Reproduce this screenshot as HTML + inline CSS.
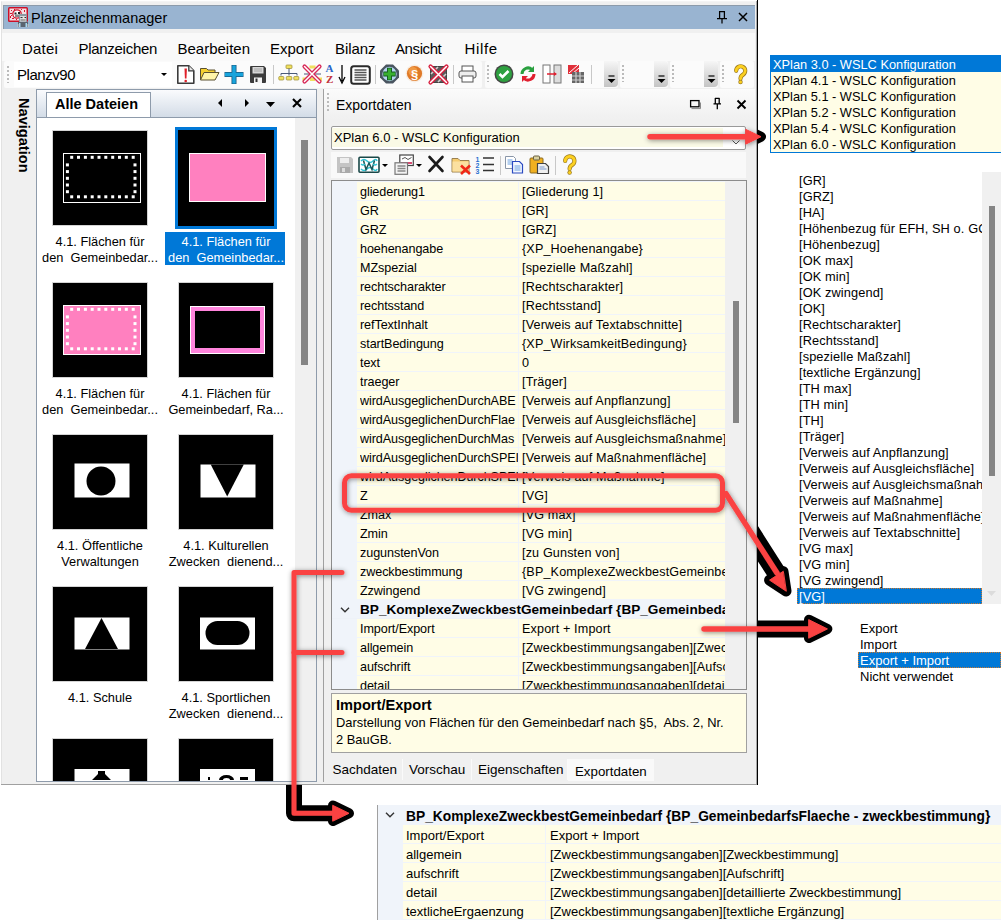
<!DOCTYPE html>
<html><head><meta charset="utf-8">
<style>
*{margin:0;padding:0;box-sizing:border-box}
html,body{width:1001px;height:920px;overflow:hidden;background:#fff;font-family:"Liberation Sans", sans-serif;color:#000}
.a{position:absolute}
.t{position:absolute;white-space:nowrap;line-height:1}
svg{position:absolute;overflow:visible}
</style></head><body>

<div class="a" style="left:1px;top:1px;width:757px;height:784px;background:#f0f0f0;border-left:1px solid #e2e2e2;border-top:1px solid #f4f4f4"></div>
<div class="a" style="left:3px;top:5px;width:752px;height:24px;background:#99b4d1;border-top:1px solid #8c9bab;border-left:1px solid #8c9bab"></div>
<div class="t" style="left:31px;top:11px;font-size:14.5px">Planzeichenmanager</div>
<svg style="left:8px;top:7px" width="21" height="21" viewBox="0 0 21 21">
<rect x="0" y="0" width="20" height="15" rx="1.5" fill="#cc1028"/>
<rect x="1.5" y="1.5" width="17" height="12" fill="#f4e0e4"/>
<g fill="#d01830"><rect x="3" y="3" width="1" height="1"/><rect x="6" y="2" width="1" height="2"/><rect x="9" y="3" width="2" height="1"/><rect x="13" y="2" width="1" height="1"/><rect x="16" y="3" width="1" height="2"/><rect x="2" y="6" width="2" height="1"/><rect x="2" y="9" width="1" height="2"/><rect x="4" y="11" width="2" height="1"/><rect x="8" y="12" width="1" height="1"/><rect x="16" y="7" width="1" height="1"/><rect x="17" y="10" width="1" height="2"/><rect x="3" y="8" width="1" height="1"/></g>
<circle cx="9" cy="7" r="4.2" fill="#fff" stroke="#d01830" stroke-width="1.3"/>
<path d="M6.5 5.5h2v2h-2zM10 5h2v2h-2z" fill="#222"/>
<rect x="7" y="7.5" width="6" height="2.5" fill="#8a8a8a"/>
<rect x="11" y="7" width="8" height="8" fill="#8e98a2"/>
<rect x="12" y="9" width="6" height="5.5" fill="#d8dce0"/>
<rect x="15" y="10" width="2" height="4" fill="#f0e6dc"/>
<path d="M12.5 10.5h2M16.5 10.5h1.5" stroke="#333" stroke-width="1"/>
<path d="M12.5 13h5" stroke="#666" stroke-width="1"/>
<rect x="10" y="15" width="10" height="5" fill="#5a6470"/>
<rect x="11" y="16" width="1.5" height="4" fill="#a8d8f0"/><rect x="17.5" y="16" width="1.5" height="4" fill="#a8d8f0"/>
<rect x="9.5" y="17" width="1" height="3" fill="#c8c8c8"/><rect x="19.5" y="17" width="1" height="3" fill="#c8c8c8"/>
</svg>
<svg style="left:716px;top:10px" width="12" height="14" viewBox="0 0 12 14">
<path d="M3 1.6h6M3.6 1v7.5M8.4 1v7.5M1 8.6h10M6 8.6v4.8" stroke="#000" stroke-width="1.25" fill="none"/></svg>
<svg style="left:738px;top:12px" width="10" height="10" viewBox="0 0 10 10">
<path d="M1 1L9 9M9 1L1 9" stroke="#000" stroke-width="1.5" fill="none"/></svg>
<div class="a" style="left:2px;top:29px;width:753px;height:32px;background:#f9f9f9;border-top:4px solid #f0f0f0"></div>
<div class="t" style="left:22px;top:40.7px;font-size:15px;letter-spacing:0.2px">Datei</div>
<div class="t" style="left:78.5px;top:40.7px;font-size:15px;letter-spacing:-0.29px">Planzeichen</div>
<div class="t" style="left:177.5px;top:40.7px;font-size:15px;letter-spacing:0px">Bearbeiten</div>
<div class="t" style="left:270px;top:40.7px;font-size:15px;letter-spacing:0px">Export</div>
<div class="t" style="left:335px;top:40.7px;font-size:15px;letter-spacing:-0.07px">Bilanz</div>
<div class="t" style="left:395px;top:40.7px;font-size:15px;letter-spacing:-0.4px">Ansicht</div>
<div class="t" style="left:464.5px;top:40.7px;font-size:15px;letter-spacing:0.65px">Hilfe</div>
<div class="a" style="left:2px;top:61px;width:753px;height:27px;background:#f0f0f0"></div>
<div class="a" style="left:4px;top:61px;width:478px;height:27px;background:#fbfbfb;border-radius:2px"></div>
<div class="a" style="left:485px;top:61px;width:133px;height:27px;background:#fbfbfb;border-radius:2px"></div>
<div class="a" style="left:620px;top:61px;width:48px;height:27px;background:#fbfbfb;border-radius:2px"></div>
<div class="a" style="left:670px;top:61px;width:48px;height:27px;background:#fbfbfb;border-radius:2px"></div>
<div class="a" style="left:720px;top:61px;width:34px;height:27px;background:#fbfbfb;border-radius:2px"></div>
<div class="a" style="left:14px;top:62px;width:158px;height:25px;background:#fff"></div>
<div class="t" style="left:17px;top:66.8px;font-size:15px;letter-spacing:-0.45px">Planzv90</div>
<svg style="left:161px;top:73px" width="6" height="4" viewBox="0 0 6 4"><path d="M0 0h6L3 3z" fill="#000"/></svg>
<div class="a" style="left:7px;top:66px;width:2px;height:17px;background:repeating-linear-gradient(#bbb 0 2px,transparent 2px 4px)"></div>
<svg style="left:176px;top:64px" width="20" height="21" viewBox="0 0 20 21"><path d="M1.8 1.8h11l5 5v12.4h-16z" fill="#fff" stroke="#3a3a3a" stroke-width="1.6" stroke-linejoin="round"/><path d="M12.8 1.8v5h5" fill="#e8e8e8" stroke="#3a3a3a" stroke-width="1.3"/><path d="M8.5 4.5h2.4l-.4 10h-1.6z" fill="#e0202a"/><circle cx="9.7" cy="17" r="1.3" fill="#e0202a"/></svg>
<svg style="left:199px;top:67px" width="21" height="14" viewBox="0 0 21 14"><path d="M1.5 1.5h6l1.5 1.5h7v9.5h-14.5z" fill="#f6d030" stroke="#5a5030" stroke-width="1"/><path d="M5 5.5h15l-4 7.5h-14.5z" fill="#fff4a8" stroke="#5a5030" stroke-width="1"/></svg>
<svg style="left:224px;top:64px" width="20" height="21" viewBox="0 0 20 21"><path d="M10 1v19M0.5 10.5h19" stroke="#1a5a80" stroke-width="5"/><path d="M10 1.5v18M1 10.5h18" stroke="#18a4dc" stroke-width="3.4"/></svg>
<svg style="left:249px;top:65px" width="18" height="19" viewBox="0 0 18 19"><path d="M1 2a1 1 0 0 1 1-1h13l2 2v14a1 1 0 0 1-1 1H2a1 1 0 0 1-1-1z" fill="#3c3c3c"/><rect x="3.5" y="2" width="11" height="6.5" fill="#d8d8d8"/><path d="M5 4h8M5 6h8" stroke="#999" stroke-width=".8"/><rect x="5" y="12.5" width="8" height="5.5" fill="#f4f4f4"/><rect x="6.5" y="13.5" width="2" height="3.5" fill="#333"/></svg>
<div class="a" style="left:273px;top:65px;width:1px;height:19px;background:#c8c8c8"></div>
<div class="a" style="left:375px;top:65px;width:1px;height:19px;background:#c8c8c8"></div>
<div class="a" style="left:453px;top:65px;width:1px;height:19px;background:#c8c8c8"></div>
<div class="a" style="left:591px;top:65px;width:1px;height:19px;background:#c8c8c8"></div>
<svg style="left:278px;top:64px" width="21" height="18" viewBox="0 0 21 18"><rect x="8" y="1" width="6" height="3.5" rx=".8" fill="#f0e060" stroke="#9a8a30" stroke-width=".7"/><path d="M11 4.5v5M3 9.5h16M3 9.5v2M19 9.5v2M11 9.5v2" stroke="#4a5a78" stroke-width="1"/><rect x="0.8" y="12.5" width="5" height="3.5" rx=".8" fill="#f0e060" stroke="#9a8a30" stroke-width=".7"/><rect x="8.3" y="12.5" width="5.5" height="3.5" rx=".8" fill="#f0e060" stroke="#9a8a30" stroke-width=".7"/><rect x="15.8" y="12.5" width="5" height="3.5" rx=".8" fill="#f0e060" stroke="#9a8a30" stroke-width=".7"/></svg>
<svg style="left:302px;top:64px" width="20" height="20" viewBox="0 0 20 20"><rect x="7.5" y="1.5" width="6" height="3" fill="#f0e060"/><path d="M2 10h17" stroke="#4a5a78" stroke-width="1"/><rect x="0.5" y="13.5" width="5" height="3.5" fill="#f0e060"/><rect x="8" y="13.5" width="5" height="3.5" fill="#f0e060"/><rect x="15" y="13.5" width="5" height="3.5" fill="#f0e060"/><path d="M2.5 2.5L17.5 17.5M17.5 2.5L2.5 17.5" stroke="#d82858" stroke-width="4.2" stroke-linecap="round"/><path d="M2.5 2.5L17.5 17.5M17.5 2.5L2.5 17.5" stroke="#fff" stroke-width="1.5" stroke-linecap="round"/></svg>
<div class="t" style="left:325.5px;top:63px;font-size:11px;font-family:'Liberation Serif',serif;color:#2a64c8;font-weight:bold">A</div>
<div class="t" style="left:326px;top:73.5px;font-size:11px;font-family:'Liberation Serif',serif;color:#c03038;font-weight:bold">Z</div>
<svg style="left:338px;top:65px" width="8" height="19" viewBox="0 0 8 19"><path d="M4 0v16M1 12l3 6 3-6" stroke="#000" stroke-width="1.3" fill="none"/></svg>
<svg style="left:350px;top:65px" width="21" height="20" viewBox="0 0 21 20"><rect x="1.2" y="1.2" width="18.6" height="17.6" rx="2.5" fill="#fff" stroke="#2a2a2a" stroke-width="2"/><path d="M4.5 5h12M4.5 7.5h12M4.5 10h12M4.5 12.5h12M4.5 15h12" stroke="#555" stroke-width="1.3"/></svg>
<svg style="left:379px;top:64px" width="21" height="20" viewBox="0 0 21 20"><path d="M7 0.5h7l6 6v7l-6 6h-7l-6-6v-7z" fill="#4a5560"/><circle cx="10.5" cy="10" r="7.2" fill="#b4d4f0"/><path d="M10.5 3.8v12.4M4.3 10h12.4" stroke="#145a20" stroke-width="5"/><path d="M10.5 4.5v11M5 10h11" stroke="#38b030" stroke-width="3.2"/></svg>
<svg style="left:405px;top:64px" width="19" height="19" viewBox="0 0 19 19"><circle cx="9.5" cy="9.5" r="9" fill="#f8eee4"/><circle cx="9.5" cy="9.5" r="7.6" fill="#e07a28"/><circle cx="8" cy="7.5" r="4.5" fill="#f8a850" opacity=".7"/><text x="9.5" y="14.5" font-size="13" text-anchor="middle" fill="#fff" font-family="Liberation Sans" font-weight="bold">§</text></svg>
<svg style="left:428px;top:64px" width="21" height="21" viewBox="0 0 21 21"><rect x="2.5" y="2.5" width="16" height="16" fill="#5a5a5a" stroke="#444"/><path d="M3 10l7-7M3 17l14-14M10 18l8-8" stroke="#cfcfcf" stroke-width="1.6"/><path d="M2.5 2.5L18.5 18.5M18.5 2.5L2.5 18.5" stroke="#d82040" stroke-width="4.2" stroke-linecap="round"/><path d="M2.5 2.5L18.5 18.5M18.5 2.5L2.5 18.5" stroke="#fff" stroke-width="1.5" stroke-linecap="round"/></svg>
<svg style="left:458px;top:65px" width="19" height="18" viewBox="0 0 19 18"><rect x="4" y="1" width="11" height="6" fill="#fff" stroke="#555"/><rect x="1" y="6" width="17" height="7" rx="2" fill="#eee" stroke="#555"/><rect x="4" y="11" width="11" height="6" fill="#fff" stroke="#555"/></svg>
<div class="a" style="left:487px;top:65px;width:2px;height:17px;background:repeating-linear-gradient(#bbb 0 2px,transparent 2px 4px)"></div>
<div class="a" style="left:622px;top:65px;width:2px;height:17px;background:repeating-linear-gradient(#bbb 0 2px,transparent 2px 4px)"></div>
<div class="a" style="left:672px;top:65px;width:2px;height:17px;background:repeating-linear-gradient(#bbb 0 2px,transparent 2px 4px)"></div>
<div class="a" style="left:722px;top:65px;width:2px;height:17px;background:repeating-linear-gradient(#bbb 0 2px,transparent 2px 4px)"></div>
<svg style="left:494px;top:64px" width="20" height="20" viewBox="0 0 20 20"><circle cx="10" cy="10" r="9.5" fill="#444"/><circle cx="10" cy="10" r="8" fill="#2ea040"/><path d="M5.5 10l3 3 6-6" stroke="#fff" stroke-width="2.6" fill="none"/></svg>
<svg style="left:520px;top:65px" width="16" height="18" viewBox="0 0 16 18"><path d="M2 9a6 6 0 0 1 10-4.5" stroke="#2aa040" stroke-width="3" fill="none"/><path d="M14 1v6h-6z" fill="#2aa040"/><path d="M14 9a6 6 0 0 1-10 4.5" stroke="#e02030" stroke-width="3" fill="none"/><path d="M2 17v-6h6z" fill="#e02030"/></svg>
<svg style="left:542px;top:64px" width="20" height="20" viewBox="0 0 20 20"><rect x="1" y="1" width="7" height="18" fill="#fff" stroke="#777"/><rect x="12" y="1" width="7" height="18" fill="#ddd" stroke="#777"/><path d="M5 10h9" stroke="#e02030" stroke-width="1.5"/><path d="M12 8l3 2-3 2z" fill="#e02030"/></svg>
<svg style="left:567px;top:64px" width="18" height="20" viewBox="0 0 18 20"><rect x="1" y="1" width="11" height="9" fill="#e0303a"/><path d="M2 9l9-8M5 10l7-6" stroke="#fff" stroke-width="1"/><rect x="5" y="8" width="12" height="11" fill="#666"/><path d="M5 12h12M5 16h12M9 8v11M13 8v11" stroke="#ccc" stroke-width="1.2"/></svg>
<div class="a" style="left:604px;top:61px;width:14px;height:26px;background:linear-gradient(#f6f6f6,#c4c4c4);border-radius:0 4px 4px 0"></div>
<svg style="left:607px;top:75px" width="9" height="9" viewBox="0 0 9 9"><path d="M1.5 1h6" stroke="#000" stroke-width="1.2"/><path d="M0.5 4h8L4.5 8z" fill="#000"/></svg>
<div class="a" style="left:654px;top:61px;width:14px;height:26px;background:linear-gradient(#f6f6f6,#c4c4c4);border-radius:0 4px 4px 0"></div>
<svg style="left:657px;top:75px" width="9" height="9" viewBox="0 0 9 9"><path d="M1.5 1h6" stroke="#000" stroke-width="1.2"/><path d="M0.5 4h8L4.5 8z" fill="#000"/></svg>
<div class="a" style="left:704px;top:61px;width:14px;height:26px;background:linear-gradient(#f6f6f6,#c4c4c4);border-radius:0 4px 4px 0"></div>
<svg style="left:707px;top:75px" width="9" height="9" viewBox="0 0 9 9"><path d="M1.5 1h6" stroke="#000" stroke-width="1.2"/><path d="M0.5 4h8L4.5 8z" fill="#000"/></svg>
<svg style="left:733px;top:65px" width="16" height="20" viewBox="0 0 16 20"><path d="M3.2 5.8a4.5 4.5 0 1 1 6.9 3.8c-1.8 1.1-2.6 2-2.6 4.1" stroke="#9a7a20" stroke-width="4.2" fill="none" stroke-linecap="round"/><circle cx="7.5" cy="17" r="2.2" fill="#9a7a20"/><path d="M3.2 5.8a4.5 4.5 0 1 1 6.9 3.8c-1.8 1.1-2.6 2-2.6 4.1" stroke="#fcd020" stroke-width="2.8" fill="none" stroke-linecap="round"/><circle cx="7.5" cy="17" r="1.5" fill="#fcd020"/></svg>
<div class="t" style="left:12px;top:98px;font-size:14.6px;font-weight:bold;transform-origin:0 0;transform:translate(18.5px,0) rotate(90deg)">Navigation</div>
<div class="a" style="left:36px;top:89px;width:281px;height:693px;border:1px solid #8e9bab;background:#fff"></div>
<div class="a" style="left:37px;top:90px;width:279px;height:28px;background:linear-gradient(#fafbfd,#d3dce7);border-bottom:1px solid #8e9bab"></div>
<div class="a" style="left:46px;top:92px;width:105px;height:26px;background:#fff;border:1px solid #8e9bab"></div>
<div class="t" style="left:55px;top:96.5px;font-size:14.5px;font-weight:bold">Alle Dateien</div>
<svg style="left:218px;top:99px" width="5" height="8" viewBox="0 0 5 8"><path d="M4 0v8L0 4z" fill="#000"/></svg>
<svg style="left:245px;top:98.5px" width="5" height="8" viewBox="0 0 5 8"><path d="M0 0v8l4-4z" fill="#000"/></svg>
<svg style="left:266px;top:102px" width="9" height="5" viewBox="0 0 9 5"><path d="M0 0h9L4.5 5z" fill="#000"/></svg>
<svg style="left:291.5px;top:98px" width="10" height="10" viewBox="0 0 10 10"><path d="M1 1L9 9M9 1L1 9" stroke="#000" stroke-width="2.1"/></svg>
<div class="a" style="left:295px;top:118px;width:21px;height:663px;background:#f0f0f0"></div>
<div class="a" style="left:301px;top:140px;width:7px;height:225px;background:#858585"></div>
<div class="a" style="left:37px;top:118px;width:258px;height:663px;overflow:hidden">
<div class="a" style="left:15px;top:12px;width:96px;height:96px;border:1px solid #d4d4d4"></div>
<svg style="left:16px;top:13px" width="94" height="94" viewBox="0 0 94 94"><rect width="94" height="94" fill="#000"/><rect x="10.5" y="22.5" width="77" height="49" fill="none" stroke="#fff" stroke-width="1"/><rect x="17.2" y="24.8" width="3" height="3" fill="#fff"/><rect x="17.2" y="64.3" width="3" height="3" fill="#fff"/><rect x="24.0" y="24.8" width="3" height="3" fill="#fff"/><rect x="24.0" y="64.3" width="3" height="3" fill="#fff"/><rect x="30.9" y="24.8" width="3" height="3" fill="#fff"/><rect x="30.9" y="64.3" width="3" height="3" fill="#fff"/><rect x="37.7" y="24.8" width="3" height="3" fill="#fff"/><rect x="37.7" y="64.3" width="3" height="3" fill="#fff"/><rect x="44.5" y="24.8" width="3" height="3" fill="#fff"/><rect x="44.5" y="64.3" width="3" height="3" fill="#fff"/><rect x="51.3" y="24.8" width="3" height="3" fill="#fff"/><rect x="51.3" y="64.3" width="3" height="3" fill="#fff"/><rect x="58.2" y="24.8" width="3" height="3" fill="#fff"/><rect x="58.2" y="64.3" width="3" height="3" fill="#fff"/><rect x="65.0" y="24.8" width="3" height="3" fill="#fff"/><rect x="65.0" y="64.3" width="3" height="3" fill="#fff"/><rect x="71.8" y="24.8" width="3" height="3" fill="#fff"/><rect x="71.8" y="64.3" width="3" height="3" fill="#fff"/><rect x="78.7" y="24.8" width="3" height="3" fill="#fff"/><rect x="78.7" y="64.3" width="3" height="3" fill="#fff"/><rect x="12.9" y="32.4" width="3" height="3" fill="#fff"/><rect x="80.5" y="32.4" width="3" height="3" fill="#fff"/><rect x="12.9" y="39.1" width="3" height="3" fill="#fff"/><rect x="80.5" y="39.1" width="3" height="3" fill="#fff"/><rect x="12.9" y="45.8" width="3" height="3" fill="#fff"/><rect x="80.5" y="45.8" width="3" height="3" fill="#fff"/><rect x="12.9" y="52.5" width="3" height="3" fill="#fff"/><rect x="80.5" y="52.5" width="3" height="3" fill="#fff"/><rect x="12.9" y="59.2" width="3" height="3" fill="#fff"/><rect x="80.5" y="59.2" width="3" height="3" fill="#fff"/></svg>
<div class="a" style="left:141px;top:12px;width:96px;height:96px;border:1px solid #d4d4d4"></div>
<svg style="left:142px;top:13px" width="94" height="94" viewBox="0 0 94 94"><rect width="94" height="94" fill="#000"/><rect x="10.5" y="22.5" width="77" height="49" fill="#ff80bf" stroke="#fff" stroke-width="1"/></svg>
<div class="a" style="left:15px;top:164px;width:96px;height:96px;border:1px solid #d4d4d4"></div>
<svg style="left:16px;top:165px" width="94" height="94" viewBox="0 0 94 94"><rect width="94" height="94" fill="#000"/><rect x="10.5" y="22.5" width="77" height="49" fill="#ff80bf" stroke="#fff" stroke-width="1"/><rect x="17.2" y="24.8" width="3" height="3" fill="#fff"/><rect x="17.2" y="64.3" width="3" height="3" fill="#fff"/><rect x="24.0" y="24.8" width="3" height="3" fill="#fff"/><rect x="24.0" y="64.3" width="3" height="3" fill="#fff"/><rect x="30.9" y="24.8" width="3" height="3" fill="#fff"/><rect x="30.9" y="64.3" width="3" height="3" fill="#fff"/><rect x="37.7" y="24.8" width="3" height="3" fill="#fff"/><rect x="37.7" y="64.3" width="3" height="3" fill="#fff"/><rect x="44.5" y="24.8" width="3" height="3" fill="#fff"/><rect x="44.5" y="64.3" width="3" height="3" fill="#fff"/><rect x="51.3" y="24.8" width="3" height="3" fill="#fff"/><rect x="51.3" y="64.3" width="3" height="3" fill="#fff"/><rect x="58.2" y="24.8" width="3" height="3" fill="#fff"/><rect x="58.2" y="64.3" width="3" height="3" fill="#fff"/><rect x="65.0" y="24.8" width="3" height="3" fill="#fff"/><rect x="65.0" y="64.3" width="3" height="3" fill="#fff"/><rect x="71.8" y="24.8" width="3" height="3" fill="#fff"/><rect x="71.8" y="64.3" width="3" height="3" fill="#fff"/><rect x="78.7" y="24.8" width="3" height="3" fill="#fff"/><rect x="78.7" y="64.3" width="3" height="3" fill="#fff"/><rect x="12.9" y="32.4" width="3" height="3" fill="#fff"/><rect x="80.5" y="32.4" width="3" height="3" fill="#fff"/><rect x="12.9" y="39.1" width="3" height="3" fill="#fff"/><rect x="80.5" y="39.1" width="3" height="3" fill="#fff"/><rect x="12.9" y="45.8" width="3" height="3" fill="#fff"/><rect x="80.5" y="45.8" width="3" height="3" fill="#fff"/><rect x="12.9" y="52.5" width="3" height="3" fill="#fff"/><rect x="80.5" y="52.5" width="3" height="3" fill="#fff"/><rect x="12.9" y="59.2" width="3" height="3" fill="#fff"/><rect x="80.5" y="59.2" width="3" height="3" fill="#fff"/></svg>
<div class="a" style="left:141px;top:164px;width:96px;height:96px;border:1px solid #d4d4d4"></div>
<svg style="left:142px;top:165px" width="94" height="94" viewBox="0 0 94 94"><rect width="94" height="94" fill="#000"/><rect x="11" y="23" width="75" height="48" fill="#fff"/><rect x="12" y="24" width="73" height="46" fill="#ff84dc"/><rect x="16" y="28" width="65" height="37" fill="#000"/></svg>
<div class="a" style="left:15px;top:316px;width:96px;height:96px;border:1px solid #d4d4d4"></div>
<svg style="left:16px;top:317px" width="94" height="94" viewBox="0 0 94 94"><rect width="94" height="94" fill="#000"/><rect x="21.5" y="28.5" width="55" height="34" fill="#fff"/><circle cx="48" cy="46" r="14.5" fill="#000"/></svg>
<div class="a" style="left:141px;top:316px;width:96px;height:96px;border:1px solid #d4d4d4"></div>
<svg style="left:142px;top:317px" width="94" height="94" viewBox="0 0 94 94"><rect width="94" height="94" fill="#000"/><g transform="translate(-1,0)"><rect x="22.5" y="29.5" width="55" height="33" fill="#fff"/><path d="M32.7 29.6h33.1L49.2 61.4z" fill="#000"/></g></svg>
<div class="a" style="left:15px;top:468px;width:96px;height:96px;border:1px solid #d4d4d4"></div>
<svg style="left:16px;top:469px" width="94" height="94" viewBox="0 0 94 94"><rect width="94" height="94" fill="#000"/><rect x="21.5" y="30.5" width="55" height="32" fill="#fff"/><path d="M32 62h33L48.5 31z" fill="#000"/></svg>
<div class="a" style="left:141px;top:468px;width:96px;height:96px;border:1px solid #d4d4d4"></div>
<svg style="left:142px;top:469px" width="94" height="94" viewBox="0 0 94 94"><rect width="94" height="94" fill="#000"/><g transform="translate(-1,0)"><rect x="22" y="30.5" width="55" height="32" fill="#fff"/><rect x="27.5" y="34" width="44" height="24" rx="12" fill="#000"/></g></svg>
<div class="a" style="left:15px;top:620px;width:96px;height:96px;border:1px solid #d4d4d4"></div>
<svg style="left:16px;top:621px" width="94" height="94" viewBox="0 0 94 94"><rect width="94" height="94" fill="#000"/><rect x="21.5" y="30" width="55" height="40" fill="#fff"/><path d="M45 32h7v3l6 6h-19l6-6z" fill="#000"/></svg>
<div class="a" style="left:141px;top:620px;width:96px;height:96px;border:1px solid #d4d4d4"></div>
<svg style="left:142px;top:621px" width="94" height="94" viewBox="0 0 94 94"><rect width="94" height="94" fill="#000"/><g transform="translate(-1,0)"><rect x="22" y="30" width="55" height="40" fill="#fff"/><rect x="30" y="38" width="2" height="3" fill="#000"/><path d="M41 41a7.5 5 0 0 1 15 0h-4a3.5 2 0 0 0 -7 0z" fill="#000"/><rect x="62" y="38" width="8" height="3" fill="#000"/></g></svg>
</div>
<div class="a" style="left:175px;top:127px;width:102px;height:102px;border:3px solid #0078d7;background:#000"><div class="a" style="left:11px;top:23px;width:77px;height:49px;background:#ff80bf;border:1px solid #fff"></div></div>
<div class="a" style="left:165px;top:232px;width:120px;height:33px;background:#0078d7"></div>
<div class="t" style="left:30px;width:140px;text-align:center;top:235.7px;font-size:12.8px;color:#000">4.1. Flächen für</div>
<div class="t" style="left:30px;width:140px;text-align:center;top:251.6px;font-size:12.8px;color:#000">den&nbsp; Gemeinbedar...</div>
<div class="t" style="left:156px;width:140px;text-align:center;top:235.7px;font-size:12.8px;color:#fff">4.1. Flächen für</div>
<div class="t" style="left:156px;width:140px;text-align:center;top:251.6px;font-size:12.8px;color:#fff">den&nbsp; Gemeinbedar...</div>
<div class="t" style="left:30px;width:140px;text-align:center;top:387.7px;font-size:12.8px;color:#000">4.1. Flächen für</div>
<div class="t" style="left:30px;width:140px;text-align:center;top:403.6px;font-size:12.8px;color:#000">den&nbsp; Gemeinbedar...</div>
<div class="t" style="left:156px;width:140px;text-align:center;top:387.7px;font-size:12.8px;color:#000">4.1. Flächen für</div>
<div class="t" style="left:156px;width:140px;text-align:center;top:403.6px;font-size:12.8px;color:#000">Gemeinbedarf, Ra...</div>
<div class="t" style="left:30px;width:140px;text-align:center;top:539.7px;font-size:12.8px;color:#000">4.1. Öffentliche</div>
<div class="t" style="left:30px;width:140px;text-align:center;top:555.6px;font-size:12.8px;color:#000">Verwaltungen</div>
<div class="t" style="left:156px;width:140px;text-align:center;top:539.7px;font-size:12.8px;color:#000">4.1. Kulturellen</div>
<div class="t" style="left:156px;width:140px;text-align:center;top:555.6px;font-size:12.8px;color:#000">Zwecken&nbsp; dienend...</div>
<div class="t" style="left:30px;width:140px;text-align:center;top:691.7px;font-size:12.8px;color:#000">4.1. Schule</div>
<div class="t" style="left:156px;width:140px;text-align:center;top:691.7px;font-size:12.8px;color:#000">4.1. Sportlichen</div>
<div class="t" style="left:156px;width:140px;text-align:center;top:707.6px;font-size:12.8px;color:#000">Zwecken&nbsp; dienend...</div>
<div class="a" style="left:316px;top:89px;width:1px;height:693px;background:#8e9bab"></div>
<div class="a" style="left:323px;top:89px;width:1px;height:693px;background:#a0a0a0"></div>
<div class="a" style="left:324px;top:89px;width:431px;height:30px;background:linear-gradient(#fbfbfb,#f0f0f0)"></div>
<div class="a" style="left:327px;top:93px;width:2px;height:18px;background:repeating-linear-gradient(#bbb 0 2px,transparent 2px 4px)"></div>
<div class="t" style="left:336px;top:97.5px;font-size:14px">Exportdaten</div>
<svg style="left:689px;top:99px" width="13" height="11" viewBox="0 0 13 11"><rect x="1.6" y="1.6" width="8.4" height="6.2" fill="none" stroke="#000" stroke-width="1.3"/><path d="M2.5 9.6h9V3.5" stroke="#888" stroke-width="1" fill="none"/></svg>
<svg style="left:712px;top:97px" width="10" height="13" viewBox="0 0 10 13"><path d="M3 1.4h4.5M3.3 1v5.6M7.2 1v5.6M1.5 6.8h7.5M5.3 6.8v5.4" stroke="#000" stroke-width="1.3" fill="none"/></svg>
<svg style="left:735.5px;top:98.5px" width="11" height="11" viewBox="0 0 11 11"><path d="M1.5 1.5L9.5 9.5M9.5 1.5L1.5 9.5" stroke="#000" stroke-width="1.9"/></svg>
<div class="a" style="left:331px;top:126px;width:415px;height:24px;background:#fff;border:1px solid #9a9a9a;border-radius:2px"></div>
<div class="a" style="left:332px;top:128px;width:391px;height:19px;background:#fafae6"></div>
<div class="t" style="left:334px;top:131px;font-size:13px">XPlan 6.0 - WSLC Konfiguration</div>
<svg style="left:732px;top:140px" width="8" height="5" viewBox="0 0 8 5"><path d="M0.5 0.5L4 4L7.5 0.5" stroke="#555" stroke-width="1" fill="none"/></svg>
<div class="a" style="left:331px;top:152px;width:415px;height:26px;background:#f9f9f9"></div>
<svg style="left:336px;top:156px" width="18" height="18" viewBox="0 0 18 18"><path d="M1 1h14l2 2v14H1z" fill="#c4c4c4"/><rect x="4" y="2" width="9" height="5" fill="#eee"/><rect x="4" y="11" width="10" height="6" fill="#aaa"/><rect x="6" y="12" width="3" height="4" fill="#ddd"/></svg>
<svg style="left:358px;top:156px" width="22" height="18" viewBox="0 0 22 18"><rect x="1" y="1.3" width="20" height="15" rx="1" fill="#fff" stroke="#1a4848" stroke-width="1.6"/><path d="M3 5q3-3 6 0t6 0 4 0M3 13q3 3 6 0t6 0 4 0" stroke="#30c4d4" stroke-width="1.6" fill="none"/><path d="M5.5 4.5l2.5 9 3-6.5 3 6.5 2.5-9" stroke="#1a5858" stroke-width="1.5" fill="none"/><path d="M3 8q2 2 4 0M15 8q2 2 4 0" stroke="#30c4d4" stroke-width="1.3" fill="none"/></svg>
<svg style="left:382px;top:164px" width="6" height="4" viewBox="0 0 6 4"><path d="M0 0h6L3 3z" fill="#000"/></svg>
<svg style="left:394px;top:154px" width="20" height="21" viewBox="0 0 20 21"><rect x="5.8" y="1" width="13.5" height="10.5" fill="#fff" stroke="#444" stroke-width="1.2"/><path d="M8 5l3-1.5 3 2 3.5-2" stroke="#555" stroke-width="1" fill="none"/><path d="M7 9h11" stroke="#d02050" stroke-width="1.6"/><rect x="1" y="8.8" width="12.5" height="11.5" fill="#f4f4f4" stroke="#777" stroke-width="1.2"/><path d="M3.5 12h8M3.5 14.5h8M3.5 17h8" stroke="#888" stroke-width="1.3"/></svg>
<svg style="left:416px;top:164px" width="6" height="4" viewBox="0 0 6 4"><path d="M0 0h6L3 3z" fill="#000"/></svg>
<svg style="left:427px;top:155px" width="18" height="18" viewBox="0 0 18 18"><path d="M2.5 2L15.5 16M15.5 2L2.5 16" stroke="#1a1a1a" stroke-width="2.6" stroke-linecap="round"/></svg>
<svg style="left:451px;top:156px" width="21" height="19" viewBox="0 0 21 19"><path d="M1 2.5h6l2 2h9v11.5H1z" fill="#f6cc70" stroke="#9a8050" stroke-width="1"/><path d="M1.5 5.5h16v10h-16z" fill="#fbe0a0"/><path d="M10 9.5l9 8.5M19 9.5l-9 8.5" stroke="#f02818" stroke-width="2.6"/></svg>
<svg style="left:475px;top:155px" width="20" height="20" viewBox="0 0 20 20"><path d="M8 3h11M8 9.5h11M8 15.5h11" stroke="#333" stroke-width="1.6"/><text x="0.5" y="6.5" font-size="7" font-weight="bold" fill="#2a70d0" font-family="Liberation Sans">1</text><text x="0.5" y="12.5" font-size="7" font-weight="bold" fill="#2a70d0" font-family="Liberation Sans">2</text><text x="0.5" y="18.5" font-size="7" font-weight="bold" fill="#2a70d0" font-family="Liberation Sans">3</text></svg>
<div class="a" style="left:500px;top:156px;width:1px;height:19px;background:#c8c8c8"></div>
<div class="a" style="left:555px;top:156px;width:1px;height:19px;background:#c8c8c8"></div>
<svg style="left:504px;top:155px" width="20" height="19" viewBox="0 0 20 19"><path d="M1.5 1.5h8l2 2v10h-10z" fill="#fff" stroke="#8a96a8" stroke-width="1"/><path d="M3.5 5h5M3.5 7h6M3.5 9h6" stroke="#6aa0e0" stroke-width="1"/><path d="M8.5 6.5h7l3 3v8.5h-10z" fill="#f4f8ff" stroke="#2a4ac0" stroke-width="1.2"/><path d="M10.5 11h6M10.5 13h6M10.5 15h6" stroke="#6aa0e0" stroke-width="1.1"/></svg>
<svg style="left:529px;top:155px" width="21" height="20" viewBox="0 0 21 20"><rect x="1" y="3" width="13" height="15" rx="1" fill="#f0b020" stroke="#8a6a20" stroke-width="1"/><rect x="4.5" y="1" width="6" height="4" rx="1" fill="#d8d0a0" stroke="#6a6040" stroke-width="1"/><path d="M8.5 8.5h8l3 3v7h-11z" fill="#f0f0f0" stroke="#444" stroke-width="1.2"/><path d="M10.5 12h5M10.5 14h7" stroke="#7a9ad0" stroke-width="1"/></svg>
<svg style="left:562px;top:155px" width="16" height="21" viewBox="0 0 16 21"><path d="M3.2 6a4.6 4.6 0 1 1 7 3.9c-1.8 1.1-2.6 2-2.6 4.2" stroke="#9a7a20" stroke-width="4.2" fill="none" stroke-linecap="round"/><circle cx="7.6" cy="17.6" r="2.2" fill="#9a7a20"/><path d="M3.2 6a4.6 4.6 0 1 1 7 3.9c-1.8 1.1-2.6 2-2.6 4.2" stroke="#fcd020" stroke-width="2.8" fill="none" stroke-linecap="round"/><circle cx="7.6" cy="17.6" r="1.5" fill="#fcd020"/></svg>
<div class="a" style="left:331px;top:180px;width:416px;height:510px;border:1px solid #8c8c8c;background:#f0f4fa"></div>
<div class="a" style="left:332px;top:181px;width:393px;height:508px;overflow:hidden">
<div class="a" style="left:25px;top:1px;width:161px;height:18px;background:#fffde6"></div>
<div class="a" style="left:187px;top:1px;width:206px;height:18px;background:#fffde6"></div>
<div class="t" style="left:28px;top:5px;font-size:12.6px;letter-spacing:-0.08px;width:158px;overflow:hidden">gliederung1</div>
<div class="t" style="left:190px;top:5px;font-size:12.6px;letter-spacing:0.15px">[Gliederung 1]</div>
<div class="a" style="left:25px;top:20px;width:161px;height:18px;background:#fffde6"></div>
<div class="a" style="left:187px;top:20px;width:206px;height:18px;background:#fffde6"></div>
<div class="t" style="left:28px;top:24px;font-size:12.6px;letter-spacing:-0.08px;width:158px;overflow:hidden">GR</div>
<div class="t" style="left:190px;top:24px;font-size:12.6px;letter-spacing:0.15px">[GR]</div>
<div class="a" style="left:25px;top:39px;width:161px;height:18px;background:#fffde6"></div>
<div class="a" style="left:187px;top:39px;width:206px;height:18px;background:#fffde6"></div>
<div class="t" style="left:28px;top:43px;font-size:12.6px;letter-spacing:-0.08px;width:158px;overflow:hidden">GRZ</div>
<div class="t" style="left:190px;top:43px;font-size:12.6px;letter-spacing:0.15px">[GRZ]</div>
<div class="a" style="left:25px;top:58px;width:161px;height:18px;background:#fffde6"></div>
<div class="a" style="left:187px;top:58px;width:206px;height:18px;background:#fffde6"></div>
<div class="t" style="left:28px;top:62px;font-size:12.6px;letter-spacing:-0.08px;width:158px;overflow:hidden">hoehenangabe</div>
<div class="t" style="left:190px;top:62px;font-size:12.6px;letter-spacing:0.15px">{XP_Hoehenangabe}</div>
<div class="a" style="left:25px;top:77px;width:161px;height:18px;background:#fffde6"></div>
<div class="a" style="left:187px;top:77px;width:206px;height:18px;background:#fffde6"></div>
<div class="t" style="left:28px;top:81px;font-size:12.6px;letter-spacing:-0.08px;width:158px;overflow:hidden">MZspezial</div>
<div class="t" style="left:190px;top:81px;font-size:12.6px;letter-spacing:0.15px">[spezielle Maßzahl]</div>
<div class="a" style="left:25px;top:96px;width:161px;height:18px;background:#fffde6"></div>
<div class="a" style="left:187px;top:96px;width:206px;height:18px;background:#fffde6"></div>
<div class="t" style="left:28px;top:100px;font-size:12.6px;letter-spacing:-0.08px;width:158px;overflow:hidden">rechtscharakter</div>
<div class="t" style="left:190px;top:100px;font-size:12.6px;letter-spacing:0.15px">[Rechtscharakter]</div>
<div class="a" style="left:25px;top:115px;width:161px;height:18px;background:#fffde6"></div>
<div class="a" style="left:187px;top:115px;width:206px;height:18px;background:#fffde6"></div>
<div class="t" style="left:28px;top:119px;font-size:12.6px;letter-spacing:-0.08px;width:158px;overflow:hidden">rechtsstand</div>
<div class="t" style="left:190px;top:119px;font-size:12.6px;letter-spacing:0.15px">[Rechtsstand]</div>
<div class="a" style="left:25px;top:134px;width:161px;height:18px;background:#fffde6"></div>
<div class="a" style="left:187px;top:134px;width:206px;height:18px;background:#fffde6"></div>
<div class="t" style="left:28px;top:138px;font-size:12.6px;letter-spacing:-0.08px;width:158px;overflow:hidden">refTextInhalt</div>
<div class="t" style="left:190px;top:138px;font-size:12.6px;letter-spacing:0.15px">[Verweis auf Textabschnitte]</div>
<div class="a" style="left:25px;top:153px;width:161px;height:18px;background:#fffde6"></div>
<div class="a" style="left:187px;top:153px;width:206px;height:18px;background:#fffde6"></div>
<div class="t" style="left:28px;top:157px;font-size:12.6px;letter-spacing:-0.08px;width:158px;overflow:hidden">startBedingung</div>
<div class="t" style="left:190px;top:157px;font-size:12.6px;letter-spacing:0.15px">{XP_WirksamkeitBedingung}</div>
<div class="a" style="left:25px;top:172px;width:161px;height:18px;background:#fffde6"></div>
<div class="a" style="left:187px;top:172px;width:206px;height:18px;background:#fffde6"></div>
<div class="t" style="left:28px;top:176px;font-size:12.6px;letter-spacing:-0.08px;width:158px;overflow:hidden">text</div>
<div class="t" style="left:190px;top:176px;font-size:12.6px;letter-spacing:0.15px">0</div>
<div class="a" style="left:25px;top:191px;width:161px;height:18px;background:#fffde6"></div>
<div class="a" style="left:187px;top:191px;width:206px;height:18px;background:#fffde6"></div>
<div class="t" style="left:28px;top:195px;font-size:12.6px;letter-spacing:-0.08px;width:158px;overflow:hidden">traeger</div>
<div class="t" style="left:190px;top:195px;font-size:12.6px;letter-spacing:0.15px">[Träger]</div>
<div class="a" style="left:25px;top:210px;width:161px;height:18px;background:#fffde6"></div>
<div class="a" style="left:187px;top:210px;width:206px;height:18px;background:#fffde6"></div>
<div class="t" style="left:28px;top:214px;font-size:12.6px;letter-spacing:-0.08px;width:158px;overflow:hidden">wirdAusgeglichenDurchABE</div>
<div class="t" style="left:190px;top:214px;font-size:12.6px;letter-spacing:0.15px">[Verweis auf Anpflanzung]</div>
<div class="a" style="left:25px;top:229px;width:161px;height:18px;background:#fffde6"></div>
<div class="a" style="left:187px;top:229px;width:206px;height:18px;background:#fffde6"></div>
<div class="t" style="left:28px;top:233px;font-size:12.6px;letter-spacing:-0.08px;width:158px;overflow:hidden">wirdAusgeglichenDurchFlae</div>
<div class="t" style="left:190px;top:233px;font-size:12.6px;letter-spacing:0.15px">[Verweis auf Ausgleichsfläche]</div>
<div class="a" style="left:25px;top:248px;width:161px;height:18px;background:#fffde6"></div>
<div class="a" style="left:187px;top:248px;width:206px;height:18px;background:#fffde6"></div>
<div class="t" style="left:28px;top:252px;font-size:12.6px;letter-spacing:-0.08px;width:158px;overflow:hidden">wirdAusgeglichenDurchMas</div>
<div class="t" style="left:190px;top:252px;font-size:12.6px;letter-spacing:0.15px">[Verweis auf Ausgleichsmaßnahme]</div>
<div class="a" style="left:25px;top:267px;width:161px;height:18px;background:#fffde6"></div>
<div class="a" style="left:187px;top:267px;width:206px;height:18px;background:#fffde6"></div>
<div class="t" style="left:28px;top:271px;font-size:12.6px;letter-spacing:-0.08px;width:158px;overflow:hidden">wirdAusgeglichenDurchSPEI</div>
<div class="t" style="left:190px;top:271px;font-size:12.6px;letter-spacing:0.15px">[Verweis auf Maßnahmenfläche]</div>
<div class="a" style="left:25px;top:286px;width:161px;height:18px;background:#fffde6"></div>
<div class="a" style="left:187px;top:286px;width:206px;height:18px;background:#fffde6"></div>
<div class="t" style="left:28px;top:290px;font-size:12.6px;letter-spacing:-0.08px;width:158px;overflow:hidden">wirdAusgeglichenDurchSPEI</div>
<div class="t" style="left:190px;top:290px;font-size:12.6px;letter-spacing:0.15px">[Verweis auf Maßnahme]</div>
<div class="a" style="left:25px;top:305px;width:161px;height:18px;background:#fffde6"></div>
<div class="a" style="left:187px;top:305px;width:206px;height:18px;background:#fffde6"></div>
<div class="t" style="left:28px;top:309px;font-size:12.6px;letter-spacing:-0.08px;width:158px;overflow:hidden">Z</div>
<div class="t" style="left:190px;top:309px;font-size:12.6px;letter-spacing:0.15px">[VG]</div>
<div class="a" style="left:25px;top:324px;width:161px;height:18px;background:#fffde6"></div>
<div class="a" style="left:187px;top:324px;width:206px;height:18px;background:#fffde6"></div>
<div class="t" style="left:28px;top:328px;font-size:12.6px;letter-spacing:-0.08px;width:158px;overflow:hidden">Zmax</div>
<div class="t" style="left:190px;top:328px;font-size:12.6px;letter-spacing:0.15px">[VG max]</div>
<div class="a" style="left:25px;top:343px;width:161px;height:18px;background:#fffde6"></div>
<div class="a" style="left:187px;top:343px;width:206px;height:18px;background:#fffde6"></div>
<div class="t" style="left:28px;top:347px;font-size:12.6px;letter-spacing:-0.08px;width:158px;overflow:hidden">Zmin</div>
<div class="t" style="left:190px;top:347px;font-size:12.6px;letter-spacing:0.15px">[VG min]</div>
<div class="a" style="left:25px;top:362px;width:161px;height:18px;background:#fffde6"></div>
<div class="a" style="left:187px;top:362px;width:206px;height:18px;background:#fffde6"></div>
<div class="t" style="left:28px;top:366px;font-size:12.6px;letter-spacing:-0.08px;width:158px;overflow:hidden">zugunstenVon</div>
<div class="t" style="left:190px;top:366px;font-size:12.6px;letter-spacing:0.15px">[zu Gunsten von]</div>
<div class="a" style="left:25px;top:381px;width:161px;height:18px;background:#fffde6"></div>
<div class="a" style="left:187px;top:381px;width:206px;height:18px;background:#fffde6"></div>
<div class="t" style="left:28px;top:385px;font-size:12.6px;letter-spacing:-0.08px;width:158px;overflow:hidden">zweckbestimmung</div>
<div class="t" style="left:190px;top:385px;font-size:12.6px;letter-spacing:0.15px">{BP_KomplexeZweckbestGemeinbedarf</div>
<div class="a" style="left:25px;top:400px;width:161px;height:18px;background:#fffde6"></div>
<div class="a" style="left:187px;top:400px;width:206px;height:18px;background:#fffde6"></div>
<div class="t" style="left:28px;top:404px;font-size:12.6px;letter-spacing:-0.08px;width:158px;overflow:hidden">Zzwingend</div>
<div class="t" style="left:190px;top:404px;font-size:12.6px;letter-spacing:0.15px">[VG zwingend]</div>
<div class="a" style="left:0;top:419px;width:393px;height:19px;background:#f0f4fa;border-bottom:1px solid #eef2f8"></div>
<svg style="left:8px;top:426px" width="10" height="6" viewBox="0 0 10 6"><path d="M1 0.8L5 4.8L9 0.8" stroke="#333" stroke-width="1.4" fill="none"/></svg>
<div class="t" style="left:28px;top:422px;font-size:13.6px;font-weight:bold">BP_KomplexeZweckbestGemeinbedarf {BP_GemeinbedarfsFlaeche - zweckbestimmung}</div>
<div class="a" style="left:25px;top:438px;width:161px;height:18px;background:#fffde6"></div>
<div class="a" style="left:187px;top:438px;width:206px;height:18px;background:#fffde6"></div>
<div class="t" style="left:28px;top:442px;font-size:12.6px;letter-spacing:-0.08px;width:158px;overflow:hidden">Import/Export</div>
<div class="t" style="left:190px;top:442px;font-size:12.6px;letter-spacing:0.15px">Export + Import</div>
<div class="a" style="left:25px;top:457px;width:161px;height:18px;background:#fffde6"></div>
<div class="a" style="left:187px;top:457px;width:206px;height:18px;background:#fffde6"></div>
<div class="t" style="left:28px;top:461px;font-size:12.6px;letter-spacing:-0.08px;width:158px;overflow:hidden">allgemein</div>
<div class="t" style="left:190px;top:461px;font-size:12.6px;letter-spacing:0.15px">[Zweckbestimmungsangaben][Zweckbestimmung]</div>
<div class="a" style="left:25px;top:476px;width:161px;height:18px;background:#fffde6"></div>
<div class="a" style="left:187px;top:476px;width:206px;height:18px;background:#fffde6"></div>
<div class="t" style="left:28px;top:480px;font-size:12.6px;letter-spacing:-0.08px;width:158px;overflow:hidden">aufschrift</div>
<div class="t" style="left:190px;top:480px;font-size:12.6px;letter-spacing:0.15px">[Zweckbestimmungsangaben][Aufschrift]</div>
<div class="a" style="left:25px;top:495px;width:161px;height:18px;background:#fffde6"></div>
<div class="a" style="left:187px;top:495px;width:206px;height:18px;background:#fffde6"></div>
<div class="t" style="left:28px;top:499px;font-size:12.6px;letter-spacing:-0.08px;width:158px;overflow:hidden">detail</div>
<div class="t" style="left:190px;top:499px;font-size:12.6px;letter-spacing:0.15px">[Zweckbestimmungsangaben][detaillierte Zweckbestimmung]</div>
</div>
<div class="a" style="left:725px;top:181px;width:21px;height:508px;background:#f0f0f0"></div>
<div class="a" style="left:733px;top:301px;width:6px;height:122px;background:#858585"></div>
<div class="a" style="left:331px;top:693px;width:416px;height:60px;border:1px solid #a0a0a0;background:#fffde6"></div>
<div class="t" style="left:336px;top:697.5px;font-size:14.6px;font-weight:bold">Import/Export</div>
<div class="t" style="left:336px;top:717px;font-size:12.9px">Darstellung von Flächen für den Gemeinbedarf nach §5,&nbsp; Abs. 2, Nr.</div>
<div class="t" style="left:336px;top:733.5px;font-size:12.9px">2 BauGB.</div>
<div class="a" style="left:324px;top:753px;width:432px;height:31px;background:#f0f0f0"></div>
<div class="a" style="left:324px;top:759px;width:79px;height:21px;background:#f0f0f0;border-right:1px solid #fafafa"></div>
<div class="t" style="left:332.5px;top:762.5px;font-size:13.5px">Sachdaten</div>
<div class="a" style="left:403px;top:759px;width:69px;height:21px;background:#f0f0f0;border-right:1px solid #fafafa"></div>
<div class="t" style="left:409px;top:762.5px;font-size:13.5px">Vorschau</div>
<div class="a" style="left:472px;top:759px;width:96px;height:21px;background:#f0f0f0;border-right:1px solid #fafafa"></div>
<div class="t" style="left:478px;top:762.5px;font-size:13.5px">Eigenschaften</div>
<div class="a" style="left:568px;top:759px;width:86px;height:22px;background:#f9f9f9"></div>
<div class="t" style="left:575px;top:764.5px;font-size:13.3px">Exportdaten</div>
<div class="a" style="left:756px;top:1px;width:1px;height:784px;background:#a8a8a8"></div>
<div class="a" style="left:757px;top:0;width:1px;height:785px;background:#000"></div>
<div class="a" style="left:1px;top:784px;width:756px;height:1px;background:#a0a0a0"></div>
<div class="a" style="left:770px;top:55px;width:235px;height:98px;border:1px solid #0078d7;background:#fffde6"></div>
<div class="a" style="left:771px;top:56px;width:232px;height:16px;background:#0078d7"></div>
<div class="t" style="left:773px;top:59px;font-size:12.8px;color:#fff">XPlan 3.0 - WSLC Konfiguration</div>
<div class="t" style="left:773px;top:75px;font-size:12.8px;color:#000">XPlan 4.1 - WSLC Konfiguration</div>
<div class="t" style="left:773px;top:91px;font-size:12.8px;color:#000">XPlan 5.1 - WSLC Konfiguration</div>
<div class="t" style="left:773px;top:107px;font-size:12.8px;color:#000">XPlan 5.2 - WSLC Konfiguration</div>
<div class="t" style="left:773px;top:123px;font-size:12.8px;color:#000">XPlan 5.4 - WSLC Konfiguration</div>
<div class="t" style="left:773px;top:139px;font-size:12.8px;color:#000">XPlan 6.0 - WSLC Konfiguration</div>
<div class="a" style="left:797px;top:172px;width:185px;height:432px;overflow:hidden">
<div class="a" style="left:0;top:416px;width:185px;height:16px;background:#0078d7;outline:1px dotted #c87830;outline-offset:-1px"></div>
<div class="t" style="left:2px;top:2.5px;font-size:12.8px;letter-spacing:0.1px;color:#000">[GR]</div>
<div class="t" style="left:2px;top:18.5px;font-size:12.8px;letter-spacing:0.1px;color:#000">[GRZ]</div>
<div class="t" style="left:2px;top:34.5px;font-size:12.8px;letter-spacing:0.1px;color:#000">[HA]</div>
<div class="t" style="left:2px;top:50.5px;font-size:12.8px;letter-spacing:0.1px;color:#000">[Höhenbezug für EFH, SH o. GOK]</div>
<div class="t" style="left:2px;top:66.5px;font-size:12.8px;letter-spacing:0.1px;color:#000">[Höhenbezug]</div>
<div class="t" style="left:2px;top:82.5px;font-size:12.8px;letter-spacing:0.1px;color:#000">[OK max]</div>
<div class="t" style="left:2px;top:98.5px;font-size:12.8px;letter-spacing:0.1px;color:#000">[OK min]</div>
<div class="t" style="left:2px;top:114.5px;font-size:12.8px;letter-spacing:0.1px;color:#000">[OK zwingend]</div>
<div class="t" style="left:2px;top:130.5px;font-size:12.8px;letter-spacing:0.1px;color:#000">[OK]</div>
<div class="t" style="left:2px;top:146.5px;font-size:12.8px;letter-spacing:0.1px;color:#000">[Rechtscharakter]</div>
<div class="t" style="left:2px;top:162.5px;font-size:12.8px;letter-spacing:0.1px;color:#000">[Rechtsstand]</div>
<div class="t" style="left:2px;top:178.5px;font-size:12.8px;letter-spacing:0.1px;color:#000">[spezielle Maßzahl]</div>
<div class="t" style="left:2px;top:194.5px;font-size:12.8px;letter-spacing:0.1px;color:#000">[textliche Ergänzung]</div>
<div class="t" style="left:2px;top:210.5px;font-size:12.8px;letter-spacing:0.1px;color:#000">[TH max]</div>
<div class="t" style="left:2px;top:226.5px;font-size:12.8px;letter-spacing:0.1px;color:#000">[TH min]</div>
<div class="t" style="left:2px;top:242.5px;font-size:12.8px;letter-spacing:0.1px;color:#000">[TH]</div>
<div class="t" style="left:2px;top:258.5px;font-size:12.8px;letter-spacing:0.1px;color:#000">[Träger]</div>
<div class="t" style="left:2px;top:274.5px;font-size:12.8px;letter-spacing:0.1px;color:#000">[Verweis auf Anpflanzung]</div>
<div class="t" style="left:2px;top:290.5px;font-size:12.8px;letter-spacing:0.1px;color:#000">[Verweis auf Ausgleichsfläche]</div>
<div class="t" style="left:2px;top:306.5px;font-size:12.8px;letter-spacing:0.1px;color:#000">[Verweis auf Ausgleichsmaßnahme]</div>
<div class="t" style="left:2px;top:322.5px;font-size:12.8px;letter-spacing:0.1px;color:#000">[Verweis auf Maßnahme]</div>
<div class="t" style="left:2px;top:338.5px;font-size:12.8px;letter-spacing:0.1px;color:#000">[Verweis auf Maßnahmenfläche]</div>
<div class="t" style="left:2px;top:354.5px;font-size:12.8px;letter-spacing:0.1px;color:#000">[Verweis auf Textabschnitte]</div>
<div class="t" style="left:2px;top:370.5px;font-size:12.8px;letter-spacing:0.1px;color:#000">[VG max]</div>
<div class="t" style="left:2px;top:386.5px;font-size:12.8px;letter-spacing:0.1px;color:#000">[VG min]</div>
<div class="t" style="left:2px;top:402.5px;font-size:12.8px;letter-spacing:0.1px;color:#000">[VG zwingend]</div>
<div class="t" style="left:2px;top:418.5px;font-size:12.8px;letter-spacing:0.1px;color:#fff">[VG]</div>
</div>
<div class="a" style="left:982px;top:172px;width:19px;height:432px;background:#f0f0f0"></div>
<div class="a" style="left:989px;top:206px;width:6px;height:270px;background:#858585"></div>
<svg style="left:987px;top:591px" width="9" height="6" viewBox="0 0 9 6"><path d="M0 0h9L4.5 5z" fill="#dcdcdc"/></svg>
<div class="a" style="left:858px;top:652px;width:143px;height:16px;background:#0078d7;outline:1px dotted #c87830;outline-offset:-1px"></div>
<div class="t" style="left:860px;top:622px;font-size:13px;color:#000">Export</div>
<div class="t" style="left:860px;top:638px;font-size:13px;color:#000">Import</div>
<div class="t" style="left:860px;top:654px;font-size:13px;color:#fff">Export + Import</div>
<div class="t" style="left:860px;top:670px;font-size:13px;color:#000">Nicht verwendet</div>
<div class="a" style="left:377px;top:805px;width:624px;height:115px;background:#f0f4fa;border-left:1px solid #a0a0a0"></div>
<svg style="left:385px;top:812px" width="10" height="6" viewBox="0 0 10 6"><path d="M1 0.8L5 4.8L9 0.8" stroke="#333" stroke-width="1.4" fill="none"/></svg>
<div class="t" style="left:406px;top:809.5px;font-size:13.8px;font-weight:bold">BP_KomplexeZweckbestGemeinbedarf {BP_GemeinbedarfsFlaeche - zweckbestimmung}</div>
<div class="a" style="left:403px;top:825px;width:142px;height:18px;background:#fffde6"></div>
<div class="a" style="left:546px;top:825px;width:455px;height:18px;background:#fffde6"></div>
<div class="t" style="left:406px;top:828.5px;font-size:13px">Import/Export</div>
<div class="t" style="left:550px;top:828.5px;font-size:13px">Export + Import</div>
<div class="a" style="left:403px;top:844px;width:142px;height:18px;background:#fffde6"></div>
<div class="a" style="left:546px;top:844px;width:455px;height:18px;background:#fffde6"></div>
<div class="t" style="left:406px;top:847.5px;font-size:13px">allgemein</div>
<div class="t" style="left:550px;top:847.5px;font-size:13px">[Zweckbestimmungsangaben][Zweckbestimmung]</div>
<div class="a" style="left:403px;top:863px;width:142px;height:18px;background:#fffde6"></div>
<div class="a" style="left:546px;top:863px;width:455px;height:18px;background:#fffde6"></div>
<div class="t" style="left:406px;top:866.5px;font-size:13px">aufschrift</div>
<div class="t" style="left:550px;top:866.5px;font-size:13px">[Zweckbestimmungsangaben][Aufschrift]</div>
<div class="a" style="left:403px;top:882px;width:142px;height:18px;background:#fffde6"></div>
<div class="a" style="left:546px;top:882px;width:455px;height:18px;background:#fffde6"></div>
<div class="t" style="left:406px;top:885.5px;font-size:13px">detail</div>
<div class="t" style="left:550px;top:885.5px;font-size:13px">[Zweckbestimmungsangaben][detaillierte Zweckbestimmung]</div>
<div class="a" style="left:403px;top:901px;width:142px;height:18px;background:#fffde6"></div>
<div class="a" style="left:546px;top:901px;width:455px;height:18px;background:#fffde6"></div>
<div class="t" style="left:406px;top:904.5px;font-size:13px">textlicheErgaenzung</div>
<div class="t" style="left:550px;top:904.5px;font-size:13px">[Zweckbestimmungsangaben][textliche Ergänzung]</div>
<svg style="left:0;top:0" width="1001" height="920" viewBox="0 0 1001 920">
<defs>
<clipPath id="cr"><rect x="757" y="0" width="300" height="920"/></clipPath>
<clipPath id="cb"><rect x="0" y="785" width="1001" height="200"/></clipPath>
<filter id="sh" x="-20%" y="-20%" width="140%" height="140%"><feDropShadow dx="0.5" dy="1" stdDeviation="2.5" flood-color="#000" flood-opacity="0.45"/></filter>
</defs>
<g clip-path="url(#cr)" fill="#000" stroke="#000" stroke-linejoin="round" stroke-linecap="round">
 <path d="M650 136.7H748" stroke-width="17"/>
 <path d="M746 129.5L761 136.7L746 144z" stroke-width="10"/>
 <path d="M726 493.7L776 572" stroke-width="19"/>
 <path d="M786 591L769.6 580.1L783 571.5z" stroke-width="11"/>
 <path d="M704 628.9H812" stroke-width="17"/>
 <path d="M809 619.8L827.4 628.9L809 638z" stroke-width="10"/>
</g>
<g clip-path="url(#cb)" fill="#000" stroke="#000" stroke-linejoin="round" stroke-linecap="round">
 <path d="M294 560V813.3H336" stroke-width="16" fill="none"/>
 <path d="M333 805.5L349 813.3L333 821z" stroke-width="10"/>
</g>
<g filter="url(#sh)" fill="#fa4343" stroke="#fa4343" stroke-linecap="round" stroke-linejoin="round">
 <rect x="344.5" y="475.8" width="378" height="34.5" rx="7" fill="none" stroke-width="5"/>
 <path d="M650 136.7H748" stroke-width="5.5"/>
 <path d="M746 129.5L761 136.7L746 144z" stroke-width="1"/>
 <path d="M726 493.7L777 573" stroke-width="5.5"/>
 <path d="M786 591L769.6 580.1L783 571.5z" stroke-width="1"/>
 <path d="M704 628.9H812" stroke-width="5.5"/>
 <path d="M809 619.8L827.4 628.9L809 638z" stroke-width="1"/>
 <path d="M342 572.5H294V813.3H336" stroke-width="5" stroke-linecap="round" fill="none"/>
 <path d="M342 652.5H294" stroke-width="5" fill="none"/>
 <path d="M333 805.5L349 813.3L333 821z" stroke-width="1"/>
</g>
</svg>
</body></html>
